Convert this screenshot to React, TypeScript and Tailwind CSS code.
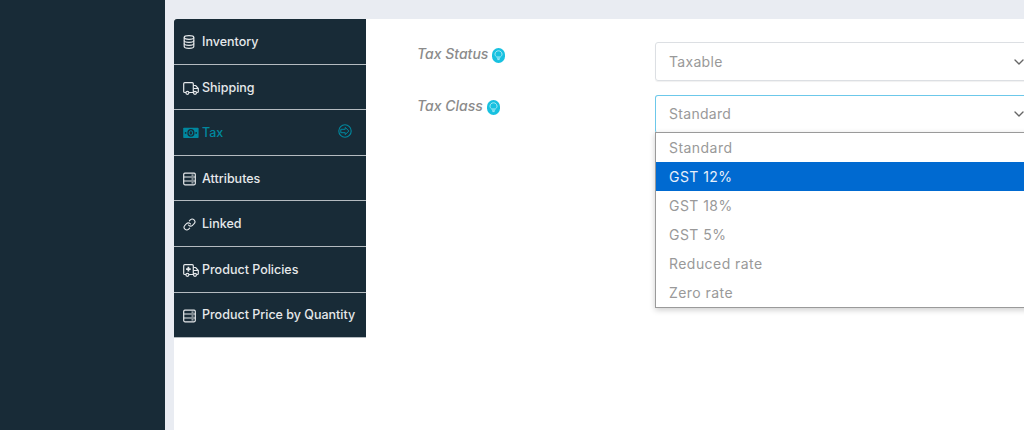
import { ChevronDown, Link as LinkIcon } from "lucide-react";
import { ComponentType } from "react";

const cls = "shrink-0";

function DbIcon() {
  return (
    <svg width="16" height="16" viewBox="0 0 16 16" fill="none" stroke="currentColor" strokeWidth="1.2" className={cls}>
      <ellipse cx="6" cy="3.5" rx="4.8" ry="1.8" />
      <path d="M1.2 3.5v9c0 1 2.1 1.8 4.8 1.8s4.8-.8 4.8-1.8v-9" />
      <path d="M1.2 6.5c0 1 2.1 1.8 4.8 1.8s4.8-.8 4.8-1.8M1.2 9.5c0 1 2.1 1.8 4.8 1.8s4.8-.8 4.8-1.8" />
    </svg>
  );
}

function TruckIcon() {
  return (
    <svg width="16" height="16" viewBox="0 0 16 16" fill="none" stroke="currentColor" strokeWidth="1.2" className={cls}>
      <path d="M3 12.5H1.8c-.6 0-1.1-.5-1.1-1.1V3.7c0-.6.5-1.1 1.1-1.1h7.4c.6 0 1.1.5 1.1 1.1v8.8H6" />
      <path d="M10.3 5.5h2.4l2.6 3v3c0 .6-.4 1-1 1h-.6M10.3 12.5h.7M10.6 8.5h4.4" />
      <circle cx="4.4" cy="12.8" r="1.5" />
      <circle cx="12" cy="12.8" r="1.5" />
    </svg>
  );
}

function BillIcon() {
  return (
    <svg width="16" height="16" viewBox="0 0 16 16" className={cls}>
      <rect x="0.2" y="2.8" width="15.4" height="10.2" rx="0.8" fill="currentColor" />
      <ellipse cx="7.9" cy="7.9" rx="3.6" ry="3.8" fill="#182b37" />
      <ellipse cx="7.9" cy="7.9" rx="1.8" ry="2.2" fill="none" stroke="currentColor" strokeWidth="1" />
      <circle cx="2.6" cy="7.9" r="0.9" fill="#182b37" />
      <circle cx="13.2" cy="7.9" r="0.9" fill="#182b37" />
    </svg>
  );
}

function RowsIcon() {
  return (
    <svg width="16" height="16" viewBox="0 0 16 16" fill="none" stroke="currentColor" strokeWidth="1.2" className={cls}>
      <rect x="0.7" y="2.2" width="11.6" height="11.6" rx="1.2" />
      <path d="M0.7 6h11.6M0.7 10h11.6" />
      <path d="M8.5 4.1h2M8.5 8h2M8.5 11.9h2" strokeWidth="1" />
    </svg>
  );
}

function ChainIcon() {
  return <LinkIcon size={13} strokeWidth={2} className="mr-[3px] shrink-0" />;
}

function AmbulanceIcon() {
  return (
    <svg width="16" height="16" viewBox="0 0 16 16" fill="none" stroke="currentColor" strokeWidth="1.2" className={cls}>
      <path d="M3 12.5H1.8c-.6 0-1.1-.5-1.1-1.1V3.7c0-.6.5-1.1 1.1-1.1h7.4c.6 0 1.1.5 1.1 1.1v8.8H6" />
      <path d="M10.3 5.5h2.4l2.6 3v3c0 .6-.4 1-1 1h-.6M10.3 12.5h.7M10.6 8.5h4.4" />
      <circle cx="4.4" cy="12.8" r="1.5" />
      <circle cx="12" cy="12.8" r="1.5" />
      <path d="M5.4 4.8v4.6M3.1 7.1h4.6" strokeWidth="1.7" />
    </svg>
  );
}

function ArrowRing() {
  return (
    <svg width="14" height="14" viewBox="0 0 14 14" fill="none" stroke="currentColor" className="ml-auto mb-[4px] shrink-0">
      <circle cx="7" cy="7" r="6.2" strokeWidth="1.1" />
      <path d="M2.8 5.3h4.4V3.4L10.9 7 7.2 10.6V8.7H2.8z" strokeWidth="1" strokeLinejoin="round" />
    </svg>
  );
}

const tabs: { label: string; icon: ComponentType; active?: boolean }[] = [
  { label: "Inventory", icon: DbIcon },
  { label: "Shipping", icon: TruckIcon },
  { label: "Tax", icon: BillIcon, active: true },
  { label: "Attributes", icon: RowsIcon },
  { label: "Linked", icon: ChainIcon },
  { label: "Product Policies", icon: AmbulanceIcon },
  { label: "Product Price by Quantity", icon: RowsIcon },
];

const options = ["Standard", "GST 12%", "GST 18%", "GST 5%", "Reduced rate", "Zero rate"];

function Hint({ className }: { className: string }) {
  return (
    <span className={"ml-[4px] flex h-[15px] w-[13px] items-center justify-center rounded-full bg-[#17c1e0] " + className}>
      <svg width="9" height="11" viewBox="0 0 9 11" fill="none" stroke="#a5e9f5" strokeWidth="1">
        <path d="M2.6 7C1.6 6.2 1 5.3 1 4.1 1 2.2 2.6.8 4.5.8S8 2.2 8 4.1C8 5.3 7.4 6.2 6.4 7z" />
        <path d="M3 8.2h3M3.4 9.6h2.2" />
      </svg>
    </span>
  );
}

export default function App() {
  return (
    <div className="flex h-[430px] w-[1024px] overflow-hidden bg-[#e9ecf2] font-['Inter','Liberation_Sans',sans-serif]">
      {/* Sidebar */}
      <div className="h-full w-[165px] shrink-0 bg-[#182b37]" />

      <div className="ml-[9px] mt-[19px] flex flex-1 items-start bg-white">
        {/* Tabs */}
        <div className="w-[192px] shrink-0 overflow-hidden rounded-tl-[3px] bg-[#182b37]">
          {tabs.map((t) => (
            <div
              key={t.label}
              className={
                "flex h-[45.6px] items-center border-b border-[#b4bbc0] pl-[9px] pr-[14px] pt-[2px] text-[12.5px] font-medium " +
                (t.active ? "text-[#00889f]" : "text-[#e6e9eb]")
              }
            >
              <t.icon />
              <span className="ml-[3px] whitespace-nowrap">{t.label}</span>
              {t.active && <ArrowRing />}
            </div>
          ))}
        </div>

        {/* Form */}
        <div className="relative ml-[51px] flex-1 pt-[23px]">
          <div className="flex h-[39px] items-start">
            <div className="flex w-[238px] items-start text-[14px] font-medium italic text-[#8b8b8b]">
              <span className="mt-[2px] leading-[20px]">Tax Status</span>
              <Hint className="mt-[6px]" />
            </div>
            <div className="mr-[-6px] flex h-[39px] flex-1 items-center justify-between rounded-l-[3px] border border-[#dcdfe3] pl-[13px] pr-[2px] text-[14px] tracking-[0.3px] text-[#999] shadow-[0_1px_1px_rgba(0,0,0,0.06)]">
              Taxable
              <ChevronDown size={16} strokeWidth={2} className="text-[#666]" />
            </div>
          </div>
          <div className="mt-[14px] flex h-[39px] items-start">
            <div className="flex w-[238px] items-start text-[14px] font-medium italic text-[#8b8b8b]">
              <span className="mt-[1px] leading-[20px]">Tax Class</span>
              <Hint className="mt-[5px]" />
            </div>
            <div className="relative mr-[-6px] flex-1">
              <div className="flex h-[38px] items-center justify-between rounded-l-[3px] border border-b-0 border-[#6cc8ea] pb-[2px] pl-[13px] pr-[2px] text-[14px] tracking-[0.3px] text-[#999]">
                Standard
                <ChevronDown size={16} strokeWidth={2} className="text-[#666]" />
              </div>
              {/* Open dropdown */}
              <div className="absolute left-0 right-0 top-[37px] border border-[#9a9a9a] bg-white shadow-[0_2px_6px_rgba(0,0,0,0.2)]">
                {options.map((o) => (
                  <div
                    key={o}
                    className={
                      "flex h-[29px] items-center pl-[13px] text-[14px] tracking-[0.45px] " +
                      (o === "GST 12%" ? "bg-[#006ad1] text-[#e8f0fa]" : "text-[#999]")
                    }
                  >
                    {o}
                  </div>
                ))}
              </div>
            </div>
          </div>
        </div>
      </div>
    </div>
  );
}
